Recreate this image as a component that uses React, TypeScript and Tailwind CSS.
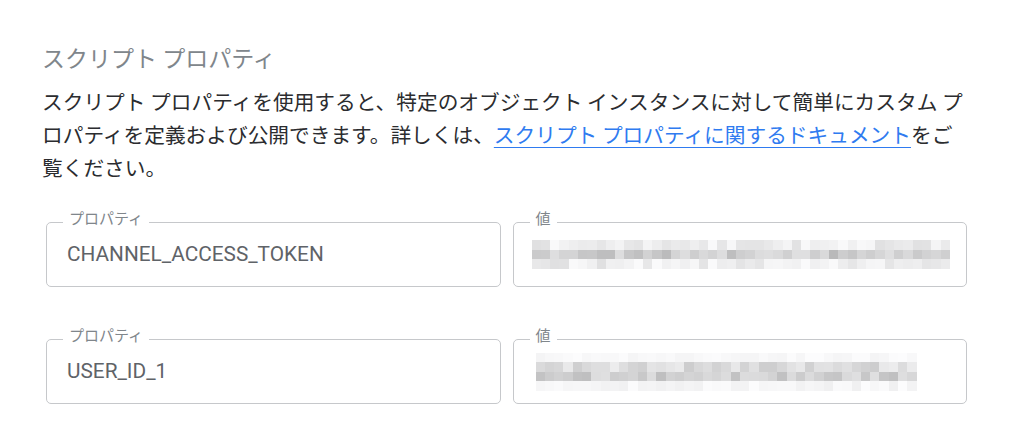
import React from "react";

const jp = { fontFamily: '"Noto Sans CJK JP", "Noto Sans", sans-serif' };

// deterministic noise for the pixelated (redacted) values
function mulberry(seed: number) {
  return () => {
    seed |= 0;
    seed = (seed + 0x6d2b79f5) | 0;
    let t = Math.imul(seed ^ (seed >>> 15), 1 | seed);
    t = (t + Math.imul(t ^ (t >>> 7), 61 | t)) ^ t;
    return ((t ^ (t >>> 14)) >>> 0) / 4294967296;
  };
}

function Mosaic({ cols, rows, seed }: { cols: number; rows: number[][]; seed: number }) {
  const rnd = mulberry(seed);
  return (
    <div className="flex flex-col">
      {rows.map(([lo, hi], r) => (
        <div key={r} className="flex h-[9.5px]">
          {Array.from({ length: cols }).map((_, c) => {
            const v = Math.round(lo + (hi - lo) * rnd());
            return <div key={c} className="w-[9.3px] h-full" style={{ backgroundColor: `rgb(${v},${v},${v + 1})` }} />;
          })}
        </div>
      ))}
    </div>
  );
}

function Field({ label, children }: { label: string; children: React.ReactNode }) {
  return (
    <div className="relative h-[65px] rounded-[5px] border border-[#c6c8cb] flex items-center pl-5">
      <span
        className="absolute left-4 top-[-13px] px-[6px] bg-white text-[15px] leading-[16px] text-[#80868b]"
        style={jp}
      >
        {label}
      </span>
      {children}
    </div>
  );
}

export default function App() {
  return (
    <div className="w-[1024px] h-[426px] bg-white overflow-hidden pl-[42px] pt-[41px]" style={jp}>
      <h2 className="text-[23px] leading-[32px] text-[#80868b] font-normal">スクリプト プロパティ</h2>

      <p className="mt-[12px] text-[20.7px] leading-[33px] text-[#2b2c2f] whitespace-nowrap">
        スクリプト プロパティを使用すると、特定のオブジェクト インスタンスに対して簡単にカスタム プ
        <br />
        ロパティを定義および公開できます。詳しくは、
        <a href="#" className="text-[#2f7bf0] underline underline-offset-[4px] decoration-[1px]">
          スクリプト プロパティに関するドキュメント
        </a>
        をご
        <br />
        覧ください。
      </p>

      <div className="ml-1 w-[921px] mt-[38px] flex flex-col gap-[52px]">
        <div className="grid grid-cols-2 gap-3">
          <Field label="プロパティ">
            <span className="text-[20.8px] text-[#5f6368]" style={{ fontFamily: "Roboto, sans-serif" }}>
              CHANNEL_ACCESS_TOKEN
            </span>
          </Field>
          <Field label="値">
            <div className="-ml-[2px]">
              <Mosaic
                cols={45}
                seed={7}
                rows={[
                  [224, 250],
                  [185, 224],
                  [224, 250],
                ]}
              />
            </div>
          </Field>
        </div>
        <div className="grid grid-cols-2 gap-3">
          <Field label="プロパティ">
            <span className="text-[20.8px] text-[#5f6368]" style={{ fontFamily: "Roboto, sans-serif" }}>
              USER_ID_1
            </span>
          </Field>
          <Field label="値">
            <div className="ml-[2px]">
              <Mosaic
                cols={41}
                seed={19}
                rows={[
                  [244, 252],
                  [205, 238],
                  [190, 225],
                  [240, 252],
                ]}
              />
            </div>
          </Field>
        </div>
      </div>
    </div>
  );
}
